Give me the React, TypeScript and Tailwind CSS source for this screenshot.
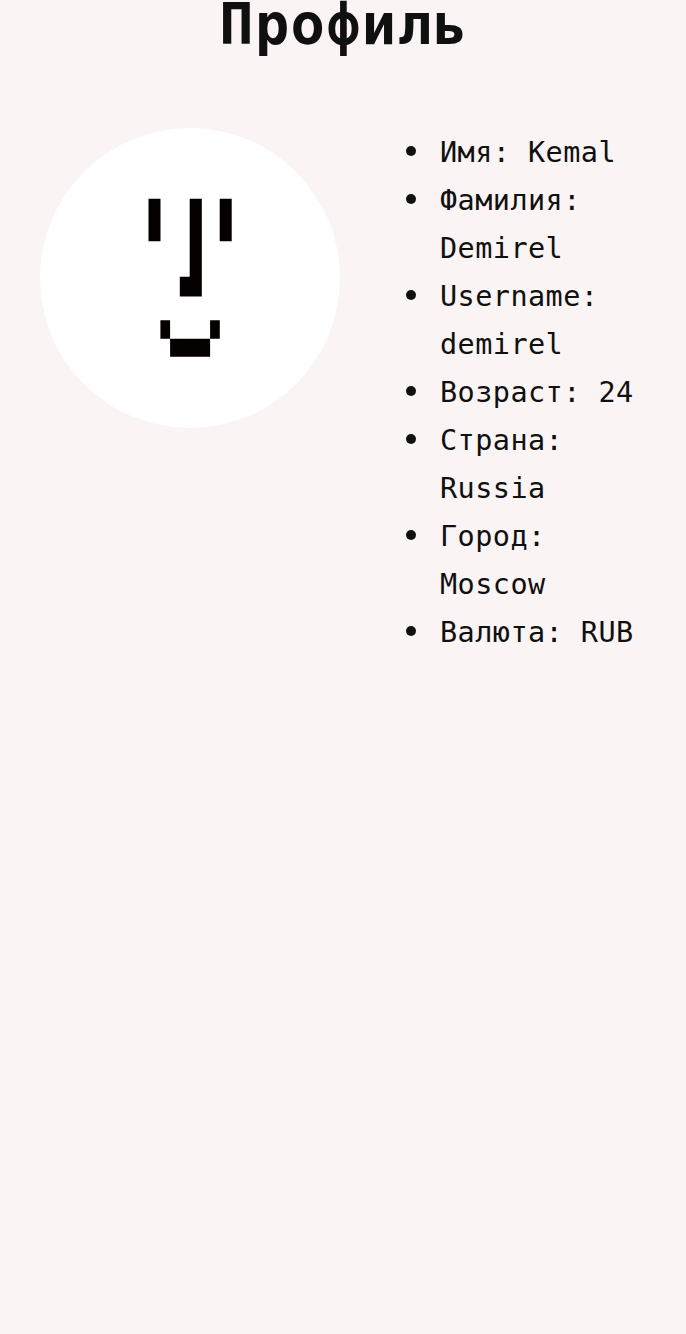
import React from "react";

const details = [
  ["Имя:", "Kemal"],
  ["Фамилия:", "Demirel"],
  ["Username:", "demirel"],
  ["Возраст:", "24"],
  ["Страна:", "Russia"],
  ["Город:", "Moscow"],
  ["Валюта:", "RUB"],
];

function Avatar() {
  return (
    <svg
      viewBox="0 0 300 300"
      className="size-[300px] shrink-0 rounded-full bg-white"
      fill="#040000"
      role="img"
    >
      <path d="M108.5 70.7h12v42.5h-12zM179.7 70.7h12v42.5h-12zM149.7 70.7h12.1v97.8h-22v-19.8h9.9zM120.4 192.3h9.7v18.4h-9.7zM170.1 192.3h9.7v18.4h-9.7zM130.1 210.7h40v18.1h-40z" />
    </svg>
  );
}

export default function App() {
  return (
    <main className="min-h-[1334px] overflow-hidden bg-[#faf4f4] font-['DejaVu_Sans_Mono',monospace] text-[#101010]">
      <h1 className="h-[88px] pl-[2px] text-center text-[57px] leading-[49px] font-bold tracking-[1.3px]">
        Профиль
      </h1>
      <section className="flex items-start gap-[60px] px-10 pt-10">
        <Avatar />
        <ul className="w-[246px] shrink-0 pt-px text-[28.5px] leading-[48px] tracking-[0.44px]">
          {details.map(([label, value]) => (
            <li key={label} className="flex">
              <span className="mt-[17px] ml-[6px] mr-[24px] size-[10px] shrink-0 rounded-full bg-[#101010]" />
              <span>
                {label} {value}
              </span>
            </li>
          ))}
        </ul>
      </section>
    </main>
  );
}
